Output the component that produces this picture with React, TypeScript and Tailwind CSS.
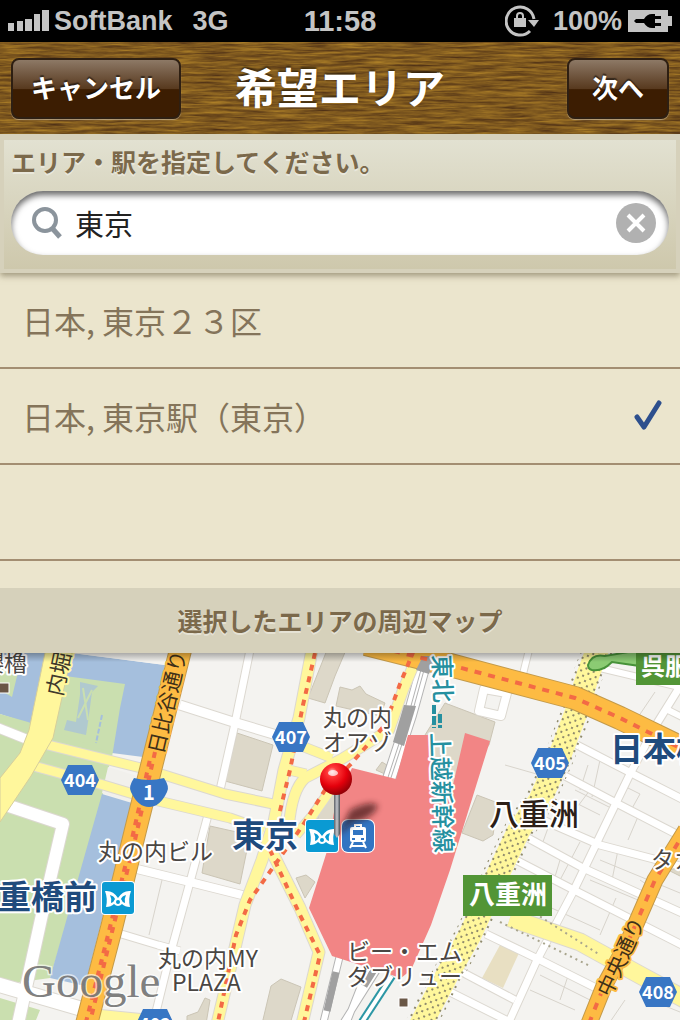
import { useState } from 'react'

const places = ['日本, 東京２３区', '日本, 東京駅（東京）']

const WHITE = '#ffffff'
const YELLOW = '#fff79c'
const ORANGE = '#fdbb43'
const BUILDING = '#ddd8c9'

type RoadProps = { d: string; width: number; fill?: string; casing?: string }

const RoadCasing = ({ d, width, casing = '#dcd8d0' }: RoadProps) => (
  <path d={d} stroke={casing} strokeWidth={width + 2} />
)

const RoadFill = ({ d, width, fill = WHITE }: RoadProps) => (
  <path d={d} stroke={fill} strokeWidth={width} />
)

const Roads = ({ roads }: { roads: RoadProps[] }) => (
  <g fill="none" strokeLinejoin="round">
    {roads.map((road) => <RoadCasing key={road.d} {...road} />)}
    {roads.map((road) => <RoadFill key={road.d} {...road} />)}
  </g>
)

const streets: RoadProps[] = [
  { d: 'M-4 727L26 739', width: 9 },
  { d: 'M6 805L63 824L43 910L18 1024', width: 12 },
  { d: 'M-4 984L82 1009', width: 14 },
  { d: 'M180 705L230 721L300 742', width: 9 },
  { d: 'M250 650L234 728L220 790', width: 7 },
  { d: 'M208 815L190 882L170 955L153 1024', width: 7 },
  { d: 'M137 869L190 882L246 896', width: 8 },
  { d: 'M118 933L158 945L180 951', width: 7 },
  { d: 'M529 650L523 674', width: 6 },
  { d: 'M577 745L633 774L684 800', width: 7 },
  { d: 'M565 776L620 805L684 838', width: 7 },
  { d: 'M538 818L600 845L684 867', width: 7 },
  { d: 'M528 838L583 868L684 914', width: 7 },
  { d: 'M516 860L572 889L684 946', width: 7 },
  { d: 'M486 934L540 960L600 990', width: 7 },
  { d: 'M458 970L515 1000', width: 7 },
  { d: 'M446 990L510 1022', width: 7 },
  { d: 'M684 680L656 725L631 772L600 836L573 892L537 960L508 1024', width: 7 },
  { d: 'M600 668L684 688', width: 6 },
  { d: 'M668 710L684 718', width: 6 },
  { d: 'M484 689L507 693L501 716L479 711Z', width: 8 },
]

const yellowRoads: RoadProps[] = [
  { d: 'M40 743L145 769L225 794L278 805', width: 9, fill: YELLOW },
  { d: 'M26 764L100 784L150 799L230 818L264 830', width: 9, fill: YELLOW },
  { d: 'M312 650L299 718L284 770L274 822L262 860L245 905L231 965L217 1024', width: 11, fill: YELLOW },
  { d: 'M420 650L403 690L389 730L340 760L305 778Q292 790 289 825', width: 10, fill: YELLOW },
  { d: 'M299 745L332 758', width: 9, fill: YELLOW },
  { d: 'M289 770L306 774', width: 9, fill: YELLOW },
  { d: 'M334 785L313 815L296 835', width: 9, fill: YELLOW },
  { d: 'M272 852L300 908L319 952L302 1024', width: 11, fill: YELLOW },
  { d: 'M510 918L580 942L640 975L690 1002', width: 17, fill: YELLOW },
  { d: 'M90 1018L150 1024', width: 18, fill: YELLOW },
]

const orangeRoads: RoadProps[] = [
  { d: 'M181 648L137 824L112 926L86 1026', width: 21, fill: ORANGE, casing: '#c39a4a' },
  { d: 'M366 644L450 665L575 698L620 718L690 752', width: 22, fill: ORANGE, casing: '#c39a4a' },
  { d: 'M686 830L655 880L628 942L604 986L588 1026', width: 15, fill: ORANGE, casing: '#c39a4a' },
]

const blocks = [
  'M162 880L149 935',
  'M655 692L632 726',
  'M588 765L580 790M600 760L592 797',
  'M590 790L575 810M640 812L628 840M620 784L640 794L630 812',
  'M548 828L540 850M580 842L560 880M618 850L612 880',
  'M560 860L554 880M616 898L600 935M640 880L655 890',
  'M545 905L600 930M590 880L650 905M600 860L680 893',
  'M570 970L560 1000M540 975L590 1000M530 990L575 1010M625 1000L610 1022M650 1000L680 1012',
  'M505 765L540 775M560 690L600 705M575 790L615 810M570 800L600 815',
]

type LabelProps = {
  x: number
  y: number
  size: number
  children: string
  color?: string
  halo?: string
  weight?: number
  rotate?: number
}

const Label = ({ x, y, size, children, color = '#4a4643', halo = '#ffffff', weight = 400, rotate = 0 }: LabelProps) => (
  <text
    x={x}
    y={y}
    fontSize={size}
    fontWeight={weight}
    fill={color}
    stroke={halo}
    strokeWidth={4}
    strokeLinejoin="round"
    paintOrder="stroke"
    transform={rotate ? `rotate(${rotate} ${x} ${y})` : undefined}
  >
    {children}
  </text>
)

const RouteBadge = ({ x, y, children }: { x: number; y: number; children: string }) => (
  <g>
    <path
      d={`M${x - 12} ${y - 15}H${x + 12}L${x + 19} ${y}L${x + 12} ${y + 15}H${x - 12}L${x - 19} ${y}Z`}
      fill="#3876c4"
    />
    <text x={x} y={y + 7} fontSize={18} fontWeight={700} fill="#ffffff" textAnchor="middle">{children}</text>
  </g>
)

const MetroIcon = ({ x, y }: { x: number; y: number }) => (
  <g transform={`translate(${x} ${y})`}>
    <rect x="-1" y="-1" width="34" height="34" rx="4" fill="#ffffff" />
    <rect width="32" height="32" rx="3" fill="#0a9ad3" />
    <path
      d="M3 9Q11 8 16 16Q21 8 29 9Q26 17 28 25Q23 25 20 22Q16 26 12 22Q9 25 4 25Q6 17 3 9Z"
      fill="#ffffff"
    />
    <path d="M8 13Q12 14 13 17Q12 20 9 21Q10 17 8 13ZM24 13Q20 14 19 17Q20 20 23 21Q22 17 24 13Z" fill="#0a9ad3" />
    <circle cx="16" cy="20" r="2" fill="#0a9ad3" />
  </g>
)

const TrainIcon = ({ x, y }: { x: number; y: number }) => (
  <g transform={`translate(${x} ${y})`}>
    <rect x="-1" y="-1" width="34" height="34" rx="7" fill="#ffffff" />
    <rect width="32" height="32" rx="6" fill="#3275c2" />
    <path d="M12 4H20V7H22Q24 7 24 9V20Q24 22 22 22H10Q8 22 8 20V9Q8 7 10 7H12Z" fill="#ffffff" />
    <path d="M11 10H21V15H11ZM10 18H13V20H10ZM19 18H22V20H19ZM14 6H18V7H14Z" fill="#3275c2" />
    <path d="M11 22L8 28M21 22L24 28M9 26H23" stroke="#ffffff" strokeWidth="2" />
  </g>
)

const AreaMap = () => (
  <svg
    viewBox="0 653 680 367"
    className="block h-auto w-full bg-[#f4f3f0] font-['Noto_Sans_CJK_JP',sans-serif]"
    role="img"
    aria-label="東京駅周辺マップ"
  >
    <defs>
      <pattern id="arcade" width="8" height="8" patternUnits="userSpaceOnUse" patternTransform="rotate(25)">
        <rect x="1" y="1" width="2" height="2" fill="#8f8a6c" />
        <rect x="5" y="5" width="2" height="2" fill="#8f8a6c" />
      </pattern>
      <radialGradient id="pin" cx="0.38" cy="0.28" r="0.75">
        <stop offset="0" stopColor="#ffc4c4" />
        <stop offset="0.2" stopColor="#ff3838" />
        <stop offset="0.6" stopColor="#e4000c" />
        <stop offset="1" stopColor="#8c0006" />
      </radialGradient>
      <linearGradient id="needle">
        <stop offset="0" stopColor="#5d6066" />
        <stop offset="0.5" stopColor="#c3c6cc" />
        <stop offset="1" stopColor="#4c4f55" />
      </linearGradient>
      <linearGradient id="topShade" x2="0" y2="1">
        <stop offset="0" stopColor="#000000" stopOpacity="0.3" />
        <stop offset="1" stopColor="#000000" stopOpacity="0" />
      </linearGradient>
      <filter id="soft" x="-50%" y="-50%" width="200%" height="200%">
        <feGaussianBlur stdDeviation="3" />
      </filter>
    </defs>

    {/* palace grounds and moat */}
    <path d="M0 653H72L165 665L143 757L112 753L30 724L0 714Z" fill="#a5bfdd" />
    <path d="M72 653H180L165 665Z" fill="#f4f3f0" />
    <path d="M0 690L12 697L18 672L0 668Z" fill="#cadfaf" />
    <path d="M65 676L125 684L120 708L112 757L46 745Z" fill="#cadfaf" />
    <path d="M0 714L28 722L112 753L104 790L80 880L50 978L0 985Z" fill="#cadfaf" />
    <path d="M108 767L137 776L132 803L102 793Z" fill="#f1f0ec" />
    <path d="M102 794L132 803L85 986L50 978Z" fill="#a5bfdd" />
    <path d="M0 998L40 1010L36 1020H0Z" fill="#cadfaf" />
    <path d="M80 682L98 686L92 692L88 722L86 735L64 730L67 720L76 722L80 695Z" fill="#a5bfdd" opacity="0.7" />
    <path d="M83 688L88 720M92 690L78 718" stroke="#cadfaf" strokeWidth="2" />
    <path d="M102 715L96 743" stroke="#a5bfdd" strokeWidth="2" strokeDasharray="5 2" />

    {/* buildings */}
    <g fill={BUILDING} stroke="#cbc5b5" strokeWidth="1">
      <path d="M237 733L273 745L262 791L225 781Z" />
      <path d="M210 826L250 835L240 884L202 873Z" />
      <path d="M327 650H346L335 676L325 703L308 698Z" />
      <path d="M340 687L352 690L360 686L366 694L385 703L380 716L336 706Z" />
      <path d="M324 796L336 790L333 836L314 832Z" />
      <path d="M296 878L306 875L315 882L305 898Z" />
      <path d="M271 986L281 979L301 987L290 1024H262Z" />
      <path d="M187 1016L198 1012L205 998L210 1000L206 1024H187Z" />
      <path d="M445 703L495 722L489 745L453 790H425V735Z" />
      <path d="M477 795L498 803L493 835L483 841L462 833Z" />
      <path d="M376 770L382 762L398 772L396 779Z" />
      <path d="M684 867L668 870L684 878Z" />
    </g>
    <path d="M500 945L519 953L503 988L482 978Z" fill="#e8dfc2" />

    <g fill="none" stroke="#d8d4cc" strokeWidth="1">
      {blocks.map((d) => <path key={d} d={d} />)}
    </g>
    <Roads roads={streets} />

    {/* railway */}
    <g fill="none">
      <path d="M428 650L410 715L389 779" stroke="#b4b4b4" strokeWidth="14" />
      <path d="M428 650L410 715L389 779" stroke="#ffffff" strokeWidth="12" />
      <path d="M428 650L410 715L389 779" stroke="#b4b4b4" strokeWidth="4" />
      <path d="M428 650L410 715L389 779" stroke="#ffffff" strokeWidth="2" />
      <path d="M340 955L323 1024M368 968L346 1024M378 968L344 1022" stroke="#b4b4b4" strokeWidth="8" />
      <path d="M340 955L323 1024M368 968L346 1024M378 968L344 1022" stroke="#ffffff" strokeWidth="6" />
      <path d="M336 972L327 1011M374 970L364 986" stroke="#a0a0a0" strokeWidth="7" />
      <path d="M392 976L362 1022" stroke="#2c97a5" strokeWidth="8" />
      <path d="M392 976L362 1022" stroke="#ffffff" strokeWidth="4" />
    </g>
    <path
      d="M408 735L432 735L434 785L453 785L465 733L490 741L450 870L431 925L411 970L401 978L332 956L309 908L328 848L336 800L352 768L396 779Z"
      fill="#f28585"
    />

    <Roads roads={yellowRoads} />
    <path d="M46 648H73L53 738L31 776L0 822V778L20 753L29 730Z" fill={YELLOW} stroke="#d6ce9b" strokeWidth="1" />
    <path d="M598 648L588 675L577 710L560 755L540 800L519 830L500 870L470 935L447 975L420 1026" fill="none" stroke={YELLOW} strokeWidth="23" />
    <path d="M598 648L588 675L577 710L560 755L540 800L519 830L500 870L470 935L447 975L420 1026" fill="none" stroke="url(#arcade)" strokeWidth="30" />
    <path d="M530 910L600 955M500 922L590 966" fill="none" stroke="#a9a58d" strokeWidth="2" strokeDasharray="2 4" />
    <Roads roads={orangeRoads} />
    <path d="M423 656H436L429 674L416 670Z" fill="#a0a0a0" />
    <path d="M404 705L416 706L404 746L393 742Z" fill="#a0a0a0" />

    {/* subway lines */}
    <g fill="none" stroke="#f36a45" strokeWidth="4" strokeDasharray="6 6">
      <path d="M155 752L135 840L112 932L90 1022" />
      <path d="M151 755L131 843L108 935L86 1022" strokeDashoffset="6" />
      <path d="M366 644L450 665L575 698L620 718L680 748" strokeDasharray="7 7" />
      <path d="M686 830L655 880L628 942L604 986L588 1026" strokeDasharray="7 8" />
      <path d="M315 653L303 705L290 770L279 815" />
      <path d="M414 650L400 684L385 725L350 765L325 790L303 825L250 900L236 935L218 1022" />
      <path d="M270 850L300 915L320 955L304 1022" />
    </g>

    {/* interchange */}
    <path d="M588 665Q592 653 605 656L640 650V666L612 662Q602 672 592 670Q588 669 588 665Z" fill="#8bcb73" stroke="#479239" strokeWidth="2" />
    <rect x="636" y="645" width="50" height="40" fill="#529536" />
    <text x="641" y="675" fontSize={24} fontWeight={700} fill="#ffffff">呉服</text>
    <rect x="463" y="875" width="89" height="41" fill="#529536" />
    <text x="469" y="904" fontSize={26} fontWeight={700} fill="#ffffff">八重洲</text>

    {/* street names */}
    <Label x={62} y={697} size={22} rotate={-78} halo={YELLOW} color="#3f3a2c">内堀通り</Label>
    <Label x={163} y={755} size={21} rotate={-77} halo={ORANGE} color="#3f3018">日比谷通り</Label>
    <Label x={610} y={998} size={21} rotate={-65} halo={ORANGE} color="#3f3018">中央通り</Label>
    <Label x={433} y={655} size={24} rotate={88} weight={500} color="#2590a0">東北</Label>
    <path d="M434 705V728M440 714V728" stroke="#2590a0" strokeWidth="4" strokeDasharray="9 2" />
    <Label x={431} y={733} size={24} rotate={88} weight={500} color="#2590a0">上越新幹線</Label>

    {/* places */}
    <Label x={-19} y={671} size={23}>櫻櫓</Label>
    <rect x="-2" y="683" width="11" height="10" fill="#6a5746" stroke="#ffffff" />
    <rect x="399" y="998" width="9" height="9" fill="#6a5746" stroke="#ffffff" />
    <Label x={323} y={726} size={23}>丸の内</Label>
    <Label x={323} y={751} size={23}>オアゾ</Label>
    <Label x={98} y={860} size={23}>丸の内ビル</Label>
    <Label x={158} y={967} size={23}>丸の内MY</Label>
    <Label x={172} y={991} size={23}>PLAZA</Label>
    <Label x={347} y={960} size={23}>ビー・エム</Label>
    <Label x={347} y={985} size={23}>ダブリュー</Label>
    <Label x={651} y={868} size={23}>タカシマヤ</Label>
    <Label x={489} y={825} size={30} weight={500} color="#2d1f18">八重洲</Label>
    <Label x={610} y={761} size={33} weight={700} color="#1f4b7d">日本橋</Label>
    <Label x={232} y={847} size={33} weight={700} color="#1f4b7d">東京</Label>
    <Label x={-35} y={909} size={33} weight={700} color="#1f4b7d">二重橋前</Label>

    <RouteBadge x={291} y={737}>407</RouteBadge>
    <RouteBadge x={80} y={780}>404</RouteBadge>
    <RouteBadge x={550} y={763}>405</RouteBadge>
    <RouteBadge x={658} y={992}>408</RouteBadge>
    <RouteBadge x={155} y={1024}>402</RouteBadge>
    <path d="M134 778Q149 782 164 778Q170 787 167 792Q160 807 149 807Q138 807 131 792Q128 787 134 778Z" fill="#3876c4" />
    <text x="149" y="800" fontSize={20} fontWeight={700} fill="#ffffff" textAnchor="middle">1</text>

    <MetroIcon x={102} y={882} />
    <MetroIcon x={306} y={820} />
    <TrainIcon x={342} y={820} />

    {/* selected place */}
    <path d="M338 836L350 810Q372 799 378 806Q372 819 352 823Z" fill="#301010" opacity="0.65" filter="url(#soft)" />
    <path d="M334 790H340V834L337 838L334 834Z" fill="url(#needle)" />
    <circle cx="336" cy="779" r="16" fill="url(#pin)" />
    <ellipse cx="333" cy="773" rx="5" ry="3" fill="#ffffff" opacity="0.7" />

    <text
      x="22"
      y="997"
      fontSize={47}
      fill="#6f6f6f"
      fillOpacity="0.9"
      stroke="#ffffff"
      strokeOpacity="0.6"
      strokeWidth="3"
      paintOrder="stroke"
      className="font-['Liberation_Serif',serif]"
    >
      Google
    </text>
    <rect y="653" width="680" height="9" fill="url(#topShade)" />
  </svg>
)

const StatusBar = () => (
  <div className="grid h-[42px] grid-cols-[1fr_auto_1fr] items-center bg-black px-2 font-['Liberation_Sans',sans-serif] text-[27px] leading-none font-bold text-[#c4c4c4]">
    <div className="flex items-center gap-1">
      <svg width="42" height="24" viewBox="0 0 42 24" fill="currentColor" aria-hidden="true">
        <path d="M0 14H6V22H0ZM9 12H15V22H9ZM17 10H24V22H17ZM26 5H32V22H26ZM34 1H41V22H34Z" />
      </svg>
      <span>SoftBank</span>
      <span className="ml-4">3G</span>
    </div>
    <span className="text-[29px]">11:58</span>
    <div className="flex items-center justify-end gap-[6px]">
      <svg className="mr-2" width="34" height="32" viewBox="0 0 34 32" fill="none" aria-hidden="true">
        <path d="M25 26A14 14 0 1 1 29 14" stroke="currentColor" strokeWidth="3" />
        <path d="M23 15H34L29 22Z" fill="currentColor" />
        <path d="M9 13H21V22H9Z" fill="currentColor" />
        <path d="M12 14V11A3 3 0 0 1 18 11V14" stroke="currentColor" strokeWidth="2" />
      </svg>
      <span>100%</span>
      <svg width="44" height="22" viewBox="0 0 44 22" aria-hidden="true">
        <path d="M0 0H40V6H44V16H40V22H0Z" fill="currentColor" />
        <path d="M6 11L8 9H16Q19 4 24 4H27V6H33V9H27V13H33V16H27V18H24Q19 18 16 13H8Z" fill="#000000" />
      </svg>
    </div>
  </div>
)

const WoodGrain = () => (
  <svg className="absolute inset-0 h-full w-full" aria-hidden="true">
    <filter id="wood" x="0" y="0" width="100%" height="100%" colorInterpolationFilters="sRGB">
      <feTurbulence type="fractalNoise" baseFrequency="0.03 0.4" numOctaves="4" seed="7" />
      <feColorMatrix values="0.5 0 0 0 0.25  0.42 0 0 0 0.14  0.1 0 0 0 0.07  0 0 0 0 1" />
    </filter>
    <rect width="100%" height="100%" filter="url(#wood)" />
  </svg>
)

const NavButton = ({ btnName, classStyles }: { btnName: string; classStyles: string }) => (
  <button
    type="button"
    className={`h-[61px] rounded-lg border-2 border-[#2e1f12] bg-linear-to-b from-[#8d7966] from-0% via-[#583a1f] via-50% to-[#3c1d02] to-52% pb-[2px] text-[26px] leading-none font-bold text-white shadow-[0_1px_1px_rgba(255,255,255,0.4)] text-shadow-[0_-2px_1px_rgba(0,0,0,0.5)] ${classStyles}`}
  >
    {btnName}
  </button>
)

export default function App() {
  const [query, setQuery] = useState('東京')
  const [selected, setSelected] = useState(1)

  return (
    <div className="flex min-h-screen flex-col bg-[#ebe5cd] font-['Noto_Sans_CJK_JP',sans-serif]">
      <StatusBar />

      <header className="relative h-[92px] overflow-hidden">
        <WoodGrain />
        <div className="relative grid h-full grid-cols-[1fr_auto_1fr] items-center px-[11px]">
          <NavButton btnName="キャンセル" classStyles="w-[170px]" />
          <h1 className="pb-1 text-[42px] leading-none font-bold text-white text-shadow-[0_-2px_2px_rgba(0,0,0,0.5)]">希望エリア</h1>
          <NavButton btnName="次へ" classStyles="w-[102px] justify-self-end" />
        </div>
      </header>

      <form
        className="relative h-[139px] bg-[#d6d1bb] px-1 pt-[6px] pb-1 shadow-[0_3px_6px_rgba(90,80,50,0.5)]"
        onSubmit={(e) => e.preventDefault()}
      >
        <div className="h-full bg-linear-to-b from-[#e2e1d1] to-[#cec8ac] px-[7px]">
          <label htmlFor="area" className="flex h-[51px] items-center pb-2 text-[25px] leading-none font-bold text-[#7b694b] text-shadow-[0_2px_0_rgba(255,255,255,0.4)]">
            エリア・駅を指定してください。
          </label>
          <div className="flex h-16 items-center rounded-full bg-white pr-3 pl-5 inset-shadow-[0_4px_6px_rgba(0,0,0,0.6)]">
            <svg width="32" height="34" viewBox="0 0 32 34" fill="none" stroke="#8b949c" aria-hidden="true">
              <circle cx="14" cy="14" r="11" strokeWidth="4" />
              <path d="M21 22L29 31" strokeWidth="5" />
            </svg>
            <input
              id="area"
              className="ml-3 h-11 min-w-0 flex-1 bg-transparent text-[29px] text-[#222222] outline-none"
              value={query}
              onChange={(e) => setQuery(e.target.value)}
            />
            <button type="button" aria-label="クリア" onClick={() => setQuery('')}>
              <svg width="42" height="42" viewBox="0 0 42 42" aria-hidden="true">
                <circle cx="21" cy="21" r="20" fill="#b1b1b1" />
                <path d="M13 13L29 29M29 13L13 29" stroke="#ffffff" strokeWidth="4" />
              </svg>
            </button>
          </div>
        </div>
      </form>

      <ul>
        {places.map((place, index) => (
          <li key={place} className="h-24 border-b-2 border-[#a38e72]">
            <button
              type="button"
              aria-pressed={selected === index}
              onClick={() => setSelected(index)}
              className="flex h-full w-full items-center justify-between pr-[18px] pl-[22px] text-left text-[32px] leading-none text-[#84745a]"
            >
              {place}
              {selected === index && (
                <svg width="28" height="32" viewBox="0 0 28 32" fill="none" stroke="#2d4f8d" strokeWidth="5" aria-hidden="true">
                  <path d="M3 17L10 27L25 3" strokeLinecap="round" strokeLinejoin="round" />
                </svg>
              )}
            </button>
          </li>
        ))}
        <li className="h-24 border-b-2 border-[#a38e72]" />
        <li className="h-[27px]" />
      </ul>

      <h2 className="flex h-[65px] items-center justify-center bg-[#d6d1bb] text-[25px] leading-none font-bold text-[#7b694b] text-shadow-[0_2px_0_rgba(255,255,255,0.4)]">
        選択したエリアの周辺マップ
      </h2>
      <AreaMap />
    </div>
  )
}
